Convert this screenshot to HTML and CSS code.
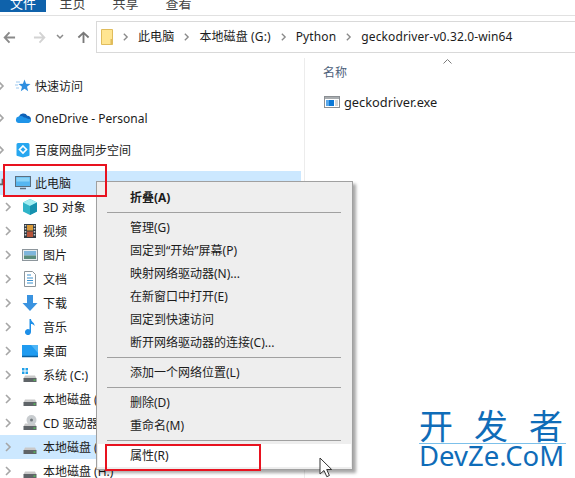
FILE: index.html
```html
<!DOCTYPE html>
<html lang="zh-CN">
<head>
<meta charset="utf-8">
<title>geckodriver-v0.32.0-win64</title>
<link rel="stylesheet" href="styles.css">
</head>
<body>
<svg class="defs" width="0" height="0" aria-hidden="true">
  <symbol id="chev" viewBox="0 0 8 12"><path d="M2 2l4 4-4 4" fill="none" stroke="currentColor" stroke-width="1.6"/></symbol>
  <symbol id="drive" viewBox="0 0 16 16">
    <path d="M3 8.500h10l1.500 3H1.500z" fill="#c9c9c9"/>
    <rect x="1.500" y="11" width="13" height="4" fill="#5f6468"/>
    <rect x="11.500" y="12.500" width="2" height="1.200" fill="#52d152"/>
  </symbol>
</svg>
<div class="window">
  <header class="ribbon">
    <span class="tab tab-file">文件</span>
    <span class="tab">主页</span>
    <span class="tab">共享</span>
    <span class="tab">查看</span>
  </header>
  <nav class="navbar">
    <div class="nav-buttons">
      <svg class="nav-ico back" viewBox="0 0 14 14"><path d="M13 7H2M7 1.500L1.800 7 7 12.500" fill="none" stroke="currentColor" stroke-width="2"/></svg>
      <svg class="nav-ico fwd" viewBox="0 0 14 14"><path d="M1 7h11M7 1.500L12.200 7 7 12.500" fill="none" stroke="currentColor" stroke-width="2"/></svg>
      <svg class="nav-ico drop" viewBox="0 0 8 6"><path d="M1 1l3 3 3-3" fill="none" stroke="currentColor" stroke-width="1.500"/></svg>
      <svg class="nav-ico up" viewBox="0 0 14 14"><path d="M7 13V2M1.500 7L7 1.800 12.500 7" fill="none" stroke="currentColor" stroke-width="2"/></svg>
    </div>
    <div class="address">
      <svg class="folder" viewBox="0 0 12 16"><path d="M.5.5h11v15H.5z" fill="#ffe591" stroke="#e0bc5c"/><rect x="9.500" y="10" width="2" height="5.500" fill="#e0bc5c"/></svg>
      <svg class="crumb-chev"><use href="#chev"/></svg><span>此电脑</span>
      <svg class="crumb-chev"><use href="#chev"/></svg><span>本地磁盘 (G:)</span>
      <svg class="crumb-chev"><use href="#chev"/></svg><span>Python</span>
      <svg class="crumb-chev"><use href="#chev"/></svg><span>geckodriver-v0.32.0-win64</span>
    </div>
  </nav>
  <div class="content">
    <aside class="sidebar">
      <div class="row top"><svg class="chev"><use href="#chev"/></svg>
        <svg class="ico" viewBox="0 0 16 16"><path d="M9.500 1.500l1.600 4.300 4.400.2-3.500 2.800 1.200 4.400-3.700-2.500L5.800 13.200l1.200-4.400L3.500 6l4.400-.2z" fill="#2f8fe0"/><path d="M1 4h4M0 7h3M1 10h3" stroke="#9cc8ee" stroke-width="1"/></svg>
        <span>快速访问</span></div>
      <div class="row top"><svg class="chev"><use href="#chev"/></svg>
        <svg class="ico" viewBox="0 0 16 16"><path d="M4 7a4.500 4.500 0 0 1 8.300-1.300A3.500 3.500 0 0 1 15.800 10L9 9z" fill="#0f62b8"/><path d="M3.800 13A3.300 3.300 0 0 1 3.500 6.500 5 5 0 0 1 9 7.500a3 3 0 0 1 3 1l3.800 1a2.500 2.500 0 0 1-2.300 3.500z" fill="#1f94e8"/></svg>
        <span>OneDrive - Personal</span></div>
      <div class="row top"><svg class="chev"><use href="#chev"/></svg>
        <svg class="ico" viewBox="0 0 16 16"><path d="M3 1h10a1.500 1.500 0 0 1 1.500 1.500V13a1 1 0 0 1-1 1l-5.500 1.500L2.500 14a1 1 0 0 1-1-1V2.500A1.500 1.500 0 0 1 3 1z" fill="#27a7f0"/><path d="M8 4l3.500 3.500L8 11 4.500 7.500z" fill="none" stroke="#fff" stroke-width="1.600"/></svg>
        <span>百度网盘同步空间</span></div>
      <div class="row pc selected"><svg class="chev open"><use href="#chev"/></svg>
        <svg class="ico" viewBox="0 0 16 16"><rect x=".5" y="1.500" width="15" height="10" fill="#56b6f0" stroke="#5b6f80"/><rect x="1.500" y="2.500" width="13" height="4" fill="#8bd4f8"/><path d="M5 13.500h6" stroke="#5b6f80" stroke-width="1.500"/></svg>
        <span>此电脑</span></div>
      <div class="row child"><svg class="chev"><use href="#chev"/></svg>
        <svg class="ico" viewBox="0 0 16 16"><path d="M8 0l7 3.500v9L8 16l-7-3.500v-9z" fill="#2fb4c8"/><path d="M8 0l7 3.500L8 7 1 3.500z" fill="#a3eef2"/><path d="M8 7l7-3.500v9L8 16z" fill="#1691ae"/></svg>
        <span>3D 对象</span></div>
      <div class="row child"><svg class="chev"><use href="#chev"/></svg>
        <svg class="ico" viewBox="0 0 16 16"><rect x="2" y="1" width="12" height="14" fill="#333b42"/><rect x="5" y="2" width="6" height="5.500" fill="#d99a38"/><rect x="5" y="8.500" width="6" height="5.500" fill="#b5533a"/><path d="M3.500 2v12M12.500 2v12" stroke="#cfd3d6" stroke-width="1.500" stroke-dasharray="1.500 1.500"/></svg>
        <span>视频</span></div>
      <div class="row child"><svg class="chev"><use href="#chev"/></svg>
        <svg class="ico" viewBox="0 0 16 16"><rect x=".5" y="2.500" width="15" height="11" fill="#e9edf0" stroke="#8d969c"/><rect x="2" y="4" width="12" height="4.500" fill="#7fb6dc"/><rect x="2" y="8.500" width="12" height="3.500" fill="#5b8d7c"/></svg>
        <span>图片</span></div>
      <div class="row child"><svg class="chev"><use href="#chev"/></svg>
        <svg class="ico" viewBox="0 0 16 16"><path d="M2.500.5h8l3 3v12h-11z" fill="#fff" stroke="#8d969c"/><path d="M5 4h4M5 7h6M5 9.500h6M5 12h6" stroke="#3b91cf"/></svg>
        <span>文档</span></div>
      <div class="row child"><svg class="chev"><use href="#chev"/></svg>
        <svg class="ico" viewBox="0 0 16 16"><path d="M5 0h6v8h4.500L8 16 .5 8H5z" fill="#3a93e0"/></svg>
        <span>下载</span></div>
      <div class="row child"><svg class="chev"><use href="#chev"/></svg>
        <svg class="ico" viewBox="0 0 16 16"><path d="M7.500 0h1.500c0 3 4 3.500 3.500 7-1-1.500-2-2-3.500-2v8a3 3 0 1 1-1.500-2.500z" fill="#1e8fe8"/></svg>
        <span>音乐</span></div>
      <div class="row child"><svg class="chev"><use href="#chev"/></svg>
        <svg class="ico" viewBox="0 0 16 16"><rect y="2" width="16" height="11.500" fill="#1f9bf0"/><path d="M0 13.500h16" stroke="#0a5f9e" stroke-width="1.500"/><path d="M9 2h7v8z" fill="#50b6f6"/></svg>
        <span>桌面</span></div>
      <div class="row child"><svg class="chev"><use href="#chev"/></svg>
        <svg class="ico" viewBox="0 0 16 16"><use href="#drive"/><path d="M0 1h2.500v2.500H0zM3.500 1H6v2.500H3.500zM0 4.500h2.500V7H0zM3.500 4.500H6V7H3.500z" fill="#20a0e8"/></svg>
        <span>系统 (C:)</span></div>
      <div class="row child"><svg class="chev"><use href="#chev"/></svg>
        <svg class="ico"><use href="#drive"/></svg>
        <span>本地磁盘 (D:)</span></div>
      <div class="row child"><svg class="chev"><use href="#chev"/></svg>
        <svg class="ico" viewBox="0 0 16 16"><use href="#drive"/><circle cx="9.500" cy="5" r="5" fill="#c8cccf"/><circle cx="9.500" cy="5" r="1.500" fill="#70777c"/></svg>
        <span>CD 驱动器 (E:)</span></div>
      <div class="row child selected"><svg class="chev"><use href="#chev"/></svg>
        <svg class="ico"><use href="#drive"/></svg>
        <span>本地磁盘 (G:)</span></div>
      <div class="row child"><svg class="chev"><use href="#chev"/></svg>
        <svg class="ico"><use href="#drive"/></svg>
        <span>本地磁盘 (H:)</span></div>
    </aside>
    <main class="files">
      <div class="col-head">
        <svg class="sort" viewBox="0 0 9 5"><path d="M.5 4.500l4-4 4 4" fill="none" stroke="#7a7a7a"/></svg>
        <div class="col-name">名称</div>
      </div>
      <div class="file">
        <svg class="exe" viewBox="0 0 16 12"><rect x=".5" y=".5" width="15" height="11" fill="#fff" stroke="#8b8f93"/><rect x="1" y="1" width="14" height="2" fill="#a9adb0"/><rect x="5" y="4" width="5" height="6" fill="#0a78d7"/><rect x="2" y="4" width="3" height="6" fill="#5aa8ea"/><path d="M11 5h3M11 7h3M11 9h3" stroke="#a9adb0"/></svg>
        <span>geckodriver.exe</span>
      </div>
    </main>
  </div>
</div>

<div class="menu">
  <div class="item strong">折叠(A)</div>
  <div class="sep"></div>
  <div class="item">管理(G)</div>
  <div class="item">固定到“开始”屏幕(P)</div>
  <div class="item">映射网络驱动器(N)...</div>
  <div class="item">在新窗口中打开(E)</div>
  <div class="item">固定到快速访问</div>
  <div class="item">断开网络驱动器的连接(C)...</div>
  <div class="sep"></div>
  <div class="item">添加一个网络位置(L)</div>
  <div class="sep"></div>
  <div class="item">删除(D)</div>
  <div class="item">重命名(M)</div>
  <div class="sep"></div>
  <div class="item hover">属性(R)</div>
</div>

<div class="mark mark-pc"></div>
<div class="mark mark-prop"></div>

<svg class="cursor" viewBox="0 0 13 21"><path d="M1 1v16l4-3.500 2.800 6.200 2.600-1.200-2.700-6h5z" fill="#fff" stroke="#333" stroke-width="1"/></svg>

<div class="watermark">
  <div class="wm-cn">开发者</div>
  <div class="wm-en">DevZe.CoM</div>
</div>
</body>
</html>
```

FILE: styles.css
```css
* { box-sizing: border-box; }

html, body {
  margin: 0;
  width: 575px;
  height: 478px;
  overflow: hidden;
  background: #fff;
}

body {
  position: relative;
  font: 12px/16px "Noto Sans", "Noto Sans CJK SC", sans-serif;
  color: #1c1c1c;
}

.defs { position: absolute; }

.window {
  display: flex;
  flex-direction: column;
  height: 478px;
}

/* ribbon */
.ribbon {
  display: flex;
  height: 16px;
  flex: none;
  border-bottom: 1px solid #e1e1e1;
  overflow: hidden;
}

.tab {
  height: 12px;
  width: 53px;
  line-height: 6px;
  font-size: 13px;
  text-align: center;
  color: #444;
}

.tab-file {
  width: 46px;
  background: #0f62ab;
  color: #fff;
}

/* navigation */
.navbar {
  display: flex;
  flex: none;
  height: 37px;
  padding-top: 5px;
  align-items: stretch;
}

.nav-buttons {
  display: flex;
  width: 96px;
  flex: none;
  align-items: center;
  padding-left: 3px;
}

.nav-ico { width: 13px; height: 13px; flex: none; }
.back { color: #8a8a8a; }
.fwd { color: #d3d3d3; margin-left: 17px; }
.drop { color: #8a8a8a; width: 8px; height: 6px; margin-left: 10px; }
.up { color: #7a7a7a; margin-left: 13px; }

.address {
  display: flex;
  flex: 1;
  align-items: center;
  gap: 9px;
  margin-right: -10px;
  padding-left: 5px;
  border: 1px solid #d9d9d9;
  border-right: 0;
  white-space: nowrap;
  font-size: 12px;
  letter-spacing: .12px;
}

.folder { width: 12px; height: 16px; flex: none; margin-left: -1px; }
.crumb-chev { width: 7px; height: 10px; flex: none; color: #8a8a8a; }

/* content */
.content {
  display: flex;
  flex: 1;
  min-height: 0;
}

.sidebar {
  width: 301px;
  flex: none;
  padding-top: 17px;
  margin-right: 3px;
}

.row {
  display: flex;
  align-items: center;
  height: 24px;
  white-space: nowrap;
}

.row span { padding-top: 2px; }

.top { height: 32px; }
.pc { margin-top: 5px; }
.selected { background: #cce8ff; }

.chev {
  width: 8px;
  height: 12px;
  flex: none;
  margin-left: -3px;
  color: #a6a6a6;
}

.chev.open { transform: rotate(45deg); color: #666; }

.ico {
  width: 16px;
  height: 16px;
  flex: none;
  margin: 0 4px 0 10px;
}

.child .ico { margin: 0 5px 0 11px; }
.child .chev { margin-left: 4px; margin-right: -1px; }

/* file list */
.files {
  flex: 1;
  border-left: 1px solid #ececec;
  margin-top: 5px;
}

.col-head { width: 284px; }

.sort {
  display: block;
  width: 9px;
  height: 5px;
  margin: 1px auto 0;
}

.col-name {
  margin-left: 18px;
  padding-top: 1px;
  color: #4c607a;
}

.file {
  display: flex;
  align-items: center;
  gap: 4px;
  margin: 13px 0 0 19px;
  font-size: 12.8px;
}

.exe { width: 16px; height: 12px; flex: none; }

/* context menu */
.menu {
  position: absolute;
  left: 96px;
  top: 181px;
  width: 257px;
  height: 289px;
  padding: 4px 1px 2px;
  background: #eeeeee;
  border: 1px solid #a0a0a0;
  box-shadow: 3px 3px 3px rgba(0, 0, 0, .35);
}

.item {
  height: 23px;
  line-height: 23px;
  padding-left: 32px;
  white-space: nowrap;
}

.strong { font-weight: 700; }
.hover { background: #fff; }

.sep {
  height: 1px;
  margin: 3px 10px 3px 9px;
  background: #a0a0a0;
}

/* annotations */
.mark {
  position: absolute;
  border: 2px solid #e8121f;
}

.mark-pc { left: 3px; top: 164px; width: 104px; height: 33px; }
.mark-prop { left: 105px; top: 444px; width: 156px; height: 27px; }

.cursor {
  position: absolute;
  left: 319px;
  top: 457px;
  width: 13px;
  height: 21px;
}

.watermark {
  position: absolute;
  left: 419px;
  top: 410px;
  width: 147px;
  color: #0f6cb8;
}

.wm-cn {
  font-size: 34px;
  line-height: 33px;
  letter-spacing: 21px;
  white-space: nowrap;
  border-bottom: 1px solid #7cc0ea;
}

.wm-en {
  font: 27.5px/24px "Noto Sans", sans-serif;
  white-space: nowrap;
}
```
